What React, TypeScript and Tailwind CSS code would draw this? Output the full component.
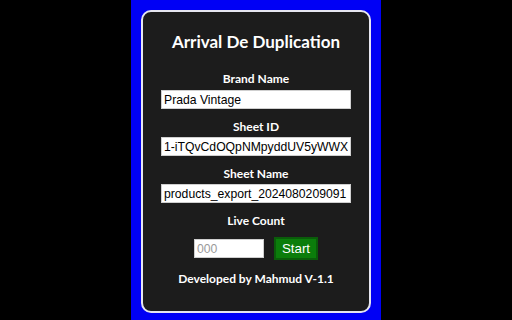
export default function App() {
  const label = 'text-[12px] font-bold leading-[15px] text-white text-center';
  const input =
    'block w-[190px] h-[19px] mx-auto bg-white text-black border border-[#cfcfcf] px-[2px] text-[12.2px] leading-[17px] outline-none';
  const arial = { fontFamily: '"Liberation Sans", Arial, sans-serif' };
  return (
    <div className="flex h-[320px] w-[512px] justify-center bg-black" style={{ fontFamily: 'Lato, "Open Sans", sans-serif' }}>
      <div className="h-[320px] w-[250px] bg-[#0000f5] px-[10px] pt-[10px]">
        <div className="rounded-[10px] border-2 border-[#e6e6f0] bg-[#1c1c1c] pt-[20px] pb-[25px]">
          <h1 className="text-center text-[17px] font-bold leading-[20px] text-white">Arrival De Duplication</h1>

          <div className={`${label} mt-[19px]`}>Brand Name</div>
          <input className={`${input} mt-[4px]`} style={arial} defaultValue="Prada Vintage" />

          <div className={`${label} mt-[10px]`}>Sheet ID</div>
          <input className={`${input} mt-[3px]`} style={arial} defaultValue="1-iTQvCdOQpNMpyddUV5yWWX" />

          <div className={`${label} mt-[10px]`}>Sheet Name</div>
          <input className={`${input} mt-[3px]`} style={arial} defaultValue="products_export_2024080209091" />

          <div className={`${label} mt-[10px]`}>Live Count</div>
          <div className="mt-[9px] flex items-center justify-center gap-[10px]">
            <input
              className="block h-[19px] w-[70px] border border-[#cfcfcf] bg-white px-[2px] text-[12.2px] text-black outline-none placeholder:text-[#9a9a9a]"
              style={arial}
              placeholder="000"
            />
            <button className="h-[23px] w-[44px] border-2 border-[#0a5c0a] bg-[#0b7d0b] text-[13.33px] text-white" style={arial}>
              Start
            </button>
          </div>

          <div className={`${label} mt-[11px]`}>Developed by Mahmud V-1.1</div>
        </div>
      </div>
    </div>
  );
}
